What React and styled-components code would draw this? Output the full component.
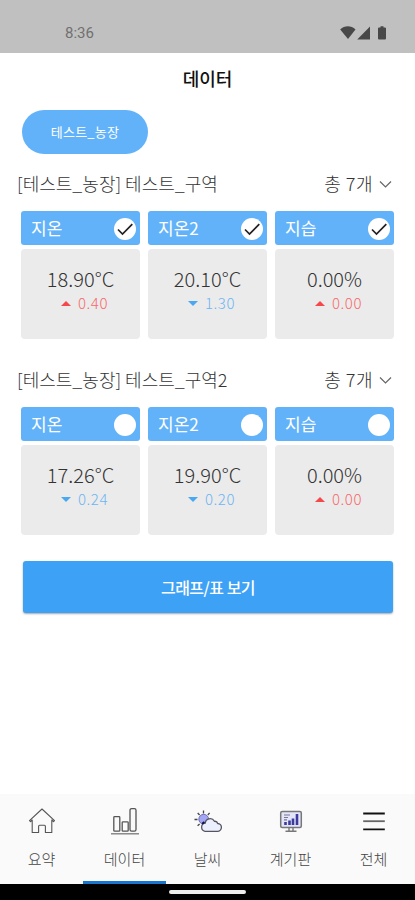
import React from 'react';
import styled, { createGlobalStyle } from 'styled-components';

const areas = [
  {
    id: 1,
    name: '[테스트_농장] 테스트_구역',
    count: 7,
    checked: true,
    sensors: [
      { name: '지온', value: '18.90°C', diff: '0.40', up: true },
      { name: '지온2', value: '20.10°C', diff: '1.30', up: false },
      { name: '지습', value: '0.00%', diff: '0.00', up: true },
    ],
  },
  {
    id: 2,
    name: '[테스트_농장] 테스트_구역2',
    count: 7,
    checked: false,
    sensors: [
      { name: '지온', value: '17.26°C', diff: '0.24', up: false },
      { name: '지온2', value: '19.90°C', diff: '0.20', up: false },
      { name: '지습', value: '0.00%', diff: '0.00', up: true },
    ],
  },
];

const HomeIcon = () => (
  <svg width="28" height="28" viewBox="0 0 28 28" fill="none" stroke="#555" strokeWidth="1.1" strokeLinejoin="round">
    <path d="M1.5 13.600 14 2l12.500 11.600-1 1L23.800 13V25.500h-6.400v-6.200a1 1 0 0 0-1-1h-4.800a1 1 0 0 0-1 1v6.200H4.200V13l-1.700 1.600z" />
  </svg>
);

const ChartIcon = () => (
  <svg width="28" height="28" viewBox="0 0 28 28" fill="none" stroke="#555" strokeWidth="1.3">
    <rect x="2.8" y="9.6" width="6" height="14.600" rx="0.8" />
    <rect x="11.2" y="14.800" width="6" height="9.4" rx="0.8" />
    <rect x="19" y="1.6" width="6" height="22.600" rx="1.6" />
    <path d="M0 26.800h28" stroke="#777" />
  </svg>
);

const WeatherIcon = () => (
  <svg width="28" height="28" viewBox="0 0 28 28" fill="none">
    <g stroke="#444" strokeWidth="1.3">
      <path d="M9.500 3.500v3M3.700 6l1.900 2M15.600 5.800l-1.800 2.200M0.500 12.500h3M3.600 18.800l2-1.800" />
    </g>
    <circle cx="9.700" cy="12.200" r="4.900" fill="#a3a5f5" stroke="#5a5b9c" strokeWidth="0.800" />
    <path
      d="M11 24.300h12.300a3.900 3.900 0 0 0 .4-7.800 3 3 0 0 0-3.300-2.200 4.900 4.900 0 0 0-9.200 1.900A4.100 4.100 0 0 0 11 24.300z"
      fill="#eceffd"
      stroke="#55555d"
      strokeWidth="1.3"
    />
    <path d="M8.200 16.700l2.200-1.700" stroke="#111149" strokeWidth="2" />
  </svg>
);

const BoardIcon = () => (
  <svg width="24" height="24" viewBox="0 0 24 24" fill="none">
    <rect x="1.700" y="2.600" width="20.600" height="15.800" rx="1.500" fill="#e3e4fa" stroke="#777" strokeWidth="1.500" />
    <path d="M10 18.500v3M14 18.500v3M6.500 22.300h11" stroke="#777" strokeWidth="1.400" />
    <path d="M6.500 13v3M10.500 11.500V16M14 9.500V16M18 5v11" stroke="#3c3b9b" strokeWidth="2.600" />
    <path d="M5 6h6M5 8.500h4M5 10.800h3" stroke="#777790" strokeWidth="1.200" />
  </svg>
);

const MenuIcon = () => (
  <svg width="24" height="24" viewBox="0 0 24 24" fill="none" stroke="#111" strokeWidth="1.800">
    <path d="M1.200 4.500h21.600M1.200 20.300h21.600" />
    <path d="M1.200 12.200h21.600" stroke="#666" />
  </svg>
);

const tabs = [
  { name: '요약', icon: <HomeIcon /> },
  { name: '데이터', icon: <ChartIcon />, active: true },
  { name: '날씨', icon: <WeatherIcon /> },
  { name: '계기판', icon: <BoardIcon /> },
  { name: '전체', icon: <MenuIcon /> },
];

const StatusIcons = () => (
  <svg width="48" height="16" viewBox="0 0 48 16" fill="#484848">
    <path d="M.2 4.400C4.500.2 11.200.2 15.500 4.400L8 14z" />
    <path d="M30 1.500V14.500H17.200z" />
    <path d="M40.500 1.200h3v1.400H45a1 1 0 0 1 1 1V13.500a1 1 0 0 1-1 1h-6a1 1 0 0 1-1-1V3.600a1 1 0 0 1 1-1h1.500z" />
  </svg>
);

const Area = ({ area }) => (
  <Section>
    <SectionHead>
      <AreaName>{area.name}</AreaName>
      <Count>
        총 {area.count}개
        <svg width="13" height="9" viewBox="0 0 13 9" fill="none" stroke="#666" strokeWidth="1.2">
          <path d="M1 1.500l5.500 5.500L12 1.500" />
        </svg>
      </Count>
    </SectionHead>
    <Cards>
      {area.sensors.map((sensor) => (
        <div key={sensor.name}>
          <CardHead>
            <SensorName>{sensor.name}</SensorName>
            <Check>
              {area.checked && (
                <svg width="22" height="22" viewBox="0 0 22 22" fill="none" stroke="#222" strokeWidth="1.700">
                  <path d="M4 11.500l4.500 4.500L18.300 6.200" />
                </svg>
              )}
            </Check>
          </CardHead>
          <CardBody>
            <Value>{sensor.value}</Value>
            <Diff $up={sensor.up}>
              <Arrow $up={sensor.up} />
              {sensor.diff}
            </Diff>
          </CardBody>
        </div>
      ))}
    </Cards>
  </Section>
);

function App() {
  return (
    <Screen>
      <GlobalStyle />
      <StatusBar>
        <Time>8:36</Time>
        <StatusIcons />
      </StatusBar>
      <Title>데이터</Title>
      <Content>
        <FarmButton>테스트_농장</FarmButton>
        {areas.map((area) => (
          <Area key={area.id} area={area} />
        ))}
        <ViewButton>그래프/표 보기</ViewButton>
      </Content>
      <TabBar>
        {tabs.map((tab) => (
          <Tab key={tab.name} $active={tab.active}>
            <TabIcon>{tab.icon}</TabIcon>
            <TabName>{tab.name}</TabName>
          </Tab>
        ))}
      </TabBar>
      <SystemBar>
        <Handle />
      </SystemBar>
    </Screen>
  );
}

const GlobalStyle = createGlobalStyle`
  * {
    box-sizing: border-box;
  }
  body {
    margin: 0;
    background: #fff;
  }
  button {
    border: 0;
    padding: 0;
    font-family: inherit;
    color: #fff;
  }
  svg {
    display: block;
    flex: none;
  }
`;

const Screen = styled.div`
  display: flex;
  flex-direction: column;
  width: 415px;
  height: 900px;
  overflow: hidden;
  font-family: 'Noto Sans CJK KR', sans-serif;
  font-weight: 300;
  color: #333;
  white-space: nowrap;
`;

const StatusBar = styled.div`
  display: flex;
  justify-content: space-between;
  align-items: center;
  height: 53px;
  padding: 13px 27px 0 65px;
  background: #c0c0c0;
`;

const Time = styled.span`
  font-family: Roboto, sans-serif;
  font-size: 15px;
  font-weight: 400;
  color: #707070;
`;

const Title = styled.h1`
  margin: 0;
  height: 57px;
  line-height: 50px;
  text-align: center;
  font-size: 18px;
  font-weight: 500;
  color: #111;
`;

const Content = styled.main`
  flex: 1;
`;

const FarmButton = styled.button`
  display: block;
  width: 126px;
  height: 44px;
  margin-left: 22px;
  padding-bottom: 2px;
  border-radius: 22px;
  background: #62b2fa;
  font-size: 13px;
  font-weight: 400;
  letter-spacing: 0.2px;
`;

const Section = styled.section`
  height: 196px;
  padding: 15px 21px 0;
`;

const SectionHead = styled.div`
  display: flex;
  justify-content: space-between;
  align-items: center;
  height: 28px;
  margin: 0 2px 14px -4px;
`;

const AreaName = styled.span`
  font-size: 18px;
`;

const Count = styled.span`
  display: flex;
  align-items: center;
  gap: 6px;
  font-size: 18px;
  letter-spacing: 0.5px;

  svg {
    margin-top: 2px;
  }
`;

const Cards = styled.div`
  display: grid;
  grid-template-columns: repeat(3, 119px);
  gap: 8px;
`;

const CardHead = styled.div`
  display: flex;
  justify-content: space-between;
  align-items: center;
  height: 34px;
  padding: 0 4px 0 10px;
  border-radius: 3px;
  background: #62b2fa;
  font-size: 17px;
  font-weight: 400;
  color: #fff;
`;

const SensorName = styled.span`
  padding-bottom: 2px;
`;

const Check = styled.span`
  width: 22px;
  height: 22px;
  margin-top: 1px;
  border-radius: 50%;
  background: #fff;
`;

const CardBody = styled.div`
  height: 90px;
  margin-top: 4px;
  padding-top: 17px;
  border-radius: 4px;
  background: #ebebeb;
  text-align: center;
`;

const Value = styled.div`
  height: 25px;
  line-height: 25px;
  font-size: 20px;
`;

const Diff = styled.div`
  display: flex;
  justify-content: center;
  align-items: center;
  gap: 7px;
  height: 22px;
  padding-left: 8px;
  font-size: 15px;
  letter-spacing: 0.5px;
  color: ${(props) => (props.$up ? '#f9676a' : '#6db5f3')};
`;

const Arrow = styled.i`
  margin-top: 2px;
  border: 5px solid transparent;
  border-width: ${(props) => (props.$up ? '0 5px 5px' : '5px 5px 0')};
  border-top-color: ${(props) => (props.$up ? 'transparent' : '#4aa8f2')};
  border-bottom-color: ${(props) => (props.$up ? '#f6484a' : 'transparent')};
`;

const ViewButton = styled.button`
  display: block;
  width: 370px;
  height: 52px;
  margin: 15px 0 0 23px;
  padding-bottom: 1px;
  border-radius: 3px;
  background: #3da1f6;
  box-shadow: 0 1px 2px rgba(0, 0, 0, 0.35);
  font-size: 16px;
  font-weight: 500;
  letter-spacing: -0.5px;
`;

const TabBar = styled.nav`
  display: flex;
  height: 90px;
  background: #fafafa;
`;

const Tab = styled.div`
  flex: 1;
  display: flex;
  flex-direction: column;
  align-items: center;
  padding-top: 13px;
  border-bottom: 3px solid ${(props) => (props.$active ? '#1976cf' : 'transparent')};
`;

const TabIcon = styled.span`
  display: flex;
  align-items: center;
  height: 28px;
`;

const TabName = styled.span`
  margin-top: 13px;
  line-height: 22px;
  font-size: 15px;
  color: #444;
`;

const SystemBar = styled.div`
  display: flex;
  justify-content: center;
  height: 16px;
  padding-top: 6px;
  background: #000;
`;

const Handle = styled.div`
  width: 77px;
  height: 4px;
  border-radius: 2px;
  background: #eee;
`;

export default App;
